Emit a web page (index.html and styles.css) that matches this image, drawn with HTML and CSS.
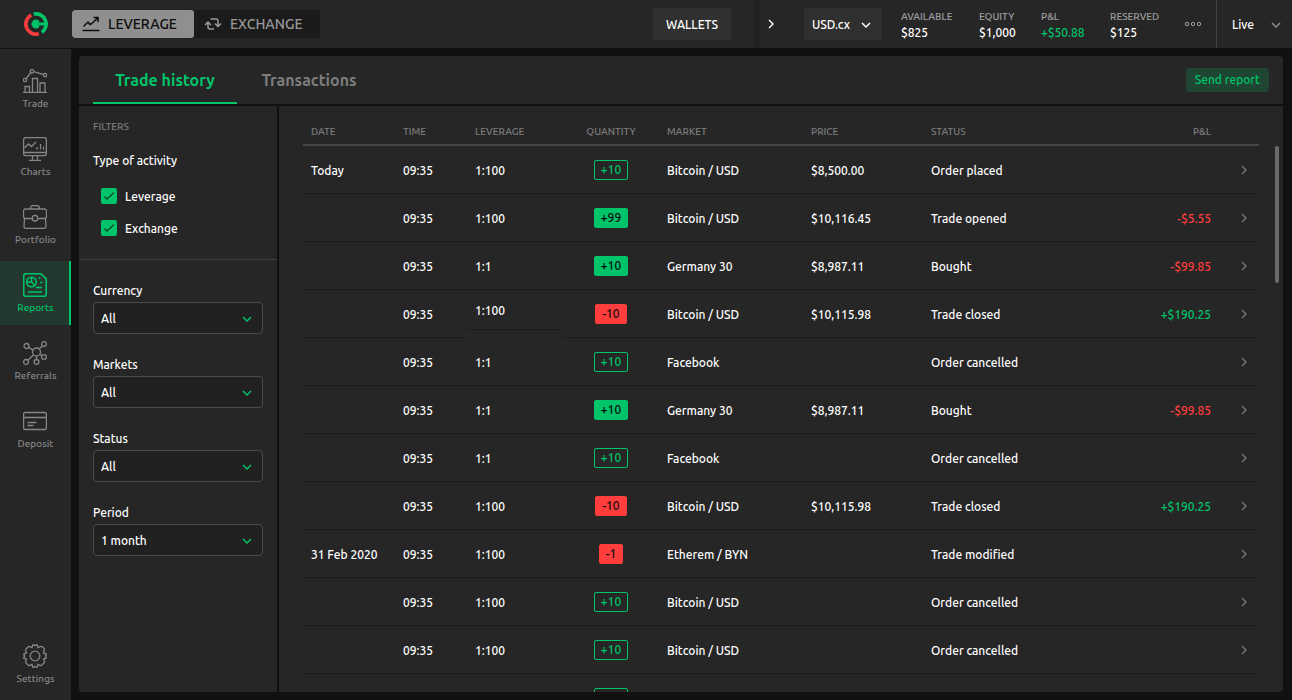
FILE: index.html
```html
<!DOCTYPE html>
<html lang="en">
<head>
<meta charset="utf-8">
<title>Trade history</title>
<link rel="stylesheet" href="styles.css">
</head>
<body>
<svg class="defs" aria-hidden="true">
  <symbol id="down" viewBox="0 0 12 12"><path d="M2 4l4 4 4-4"/></symbol>
  <symbol id="right" viewBox="0 0 12 12"><path d="M4 2l4 4-4 4"/></symbol>
</svg>
<div class="app">
  <header class="topbar">
    <svg class="logo" viewBox="0 0 24 24" aria-label="Logo">
      <path class="logo-red" d="M7.200 3A10.200 10.200 0 0 0 14.800 21.800"/>
      <path class="logo-green" d="M9.700 2.100A10.200 10.200 0 0 1 17.800 20.400"/>
      <path class="logo-mark" d="M15.500 9.200A4.500 4.500 0 1 0 15.500 14.800L14.500 13.500H22V10.500H14.500z"/>
    </svg>
    <div class="mode">
      <button class="mode-btn mode-active" type="button">
        <svg class="i18" viewBox="0 0 18 18"><path d="M.5 15.500h17M1.500 11.500l4.500-4.500 2 2.500 2-1L15.500 3M11.500 2.500h4.500V7"/></svg>LEVERAGE</button>
      <button class="mode-btn" type="button">
        <svg class="i18" viewBox="0 0 18 18"><path d="M4 7.500V12q0 2 2 2h4M1 10l3-3 3 3M6.500 4H12q2 0 2 2v5M11 8.500l3 3 3-3"/></svg>EXCHANGE</button>
    </div>
    <button class="wallets" type="button">WALLETS</button>
    <section class="account">
      <button class="collapse" type="button" aria-label="Collapse"><svg class="i12"><use href="#right"/></svg></button>
      <div class="select currency"><select aria-label="Account currency"><option>USD.cx</option></select><svg class="caret"><use href="#down"/></svg></div>
      <dl class="stats">
        <div><dt>AVAILABLE</dt><dd>$825</dd></div>
        <div><dt>EQUITY</dt><dd>$1,000</dd></div>
        <div><dt>P&amp;L</dt><dd class="up">+$50.88</dd></div>
        <div><dt>RESERVED</dt><dd>$125</dd></div>
      </dl>
      <button class="more" type="button" aria-label="More"><svg viewBox="0 0 18 6"><circle cx="3" cy="3" r="1.700"/><circle cx="9" cy="3" r="1.700"/><circle cx="15" cy="3" r="1.700"/></svg></button>
      <div class="select live"><select aria-label="Account mode"><option>Live</option></select><svg class="caret"><use href="#down"/></svg></div>
    </section>
  </header>
  <div class="body">
    <nav class="sidebar">
      <a class="nav" href="#trade"><svg viewBox="0 0 24 24"><path d="M0 23.300h24M2 23v-5.500h4.500V23M9.500 23V9.500h5V23M17 23v-9h5v9M3.200 9.500l4.500-6M10.500 2.700l9.500 2.600"/><circle cx="2" cy="11" r="1.700"/><circle cx="9" cy="2.300" r="1.700"/><circle cx="22" cy="6" r="1.700"/></svg>Trade</a>
      <a class="nav" href="#charts"><svg viewBox="0 0 24 24"><rect x=".6" y=".6" width="22.800" height="18" rx="2"/><path d="M.5 15.500h23M9.500 18.500v4M14.500 18.500v4M6 23.300h12M1.500 11l4-4 3 2.500L13 5M14 12.500V10M17.500 12.500V7M20.500 12.500V9.500"/></svg>Charts</a>
      <a class="nav" href="#portfolio"><svg viewBox="0 0 24 24"><path d="M7.500 4V3A2.400 2.400 0 0 1 10 .6h4A2.400 2.400 0 0 1 16.500 3v1M9.500 13.500h-7a2 2 0 0 1-2-2V6a2 2 0 0 1 2-2h19a2 2 0 0 1 2 2v5.500a2 2 0 0 1-2 2h-7M1.500 13.500l-.5 8a2 2 0 0 0 2 1.900h18a2 2 0 0 0 2-1.900l-.5-8"/><rect x="9.500" y="10.500" width="5" height="5.500" rx="2"/></svg>Portfolio</a>
      <a class="nav nav-active" href="#reports"><svg viewBox="0 0 24 24"><path d="M2.700.8H18l5.200 5v15.400a2 2 0 0 1-2 2H2.700a2 2 0 0 1-2-2V2.800a2 2 0 0 1 2-2zM5 19h14M8.500 4.500V9H4M8.500 9l3.500 3.500M15.500 5h2M17 9.500h2.500M13 14.500h6"/><circle cx="8.500" cy="9" r="4.800"/></svg>Reports</a>
      <a class="nav" href="#referrals"><svg viewBox="0 0 24 24"><circle cx="13.500" cy="11" r="4"/><circle cx="3.500" cy="5" r="2.500"/><circle cx="21" cy="3.100" r="2.400"/><circle cx="3" cy="20.900" r="2.400"/><circle cx="13.500" cy="20.900" r="2.400"/><circle cx="21" cy="16" r="2.400"/><path d="M5.700 6.300l4.200 2.800M16.300 8l3-3M10.700 13.800L4.900 19.300M13.500 15v3.500M17 13.200l2 1.400"/></svg>Referrals</a>
      <a class="nav" href="#deposit"><svg viewBox="0 0 24 24"><rect x=".6" y="3.500" width="22.800" height="17" rx="1.500"/><path d="M.5 8.500h23M4.500 13.500h9M4.500 16.500h6"/></svg>Deposit</a>
      <a class="nav nav-last" href="#settings"><svg viewBox="0 0 24 24"><path d="M9 3.500l.6-2.200q.2-.7 1-.7 1.400 2.200 2.800 0 .8 0 1 .7l.6 2.200 2.200-.9q1.400-.5 2.600.7l1.200 1.200q.6.700.1 1.500L20.500 9l2.200.6q.7.200.7 1-2.200 1.400 0 2.800 0 .8-.7 1l-2.200.6.9 2.200q.3.900-.3 1.600l-2.300 2.300q-.7.600-1.600.3L15 20.500l-.6 2.200q-.2.700-1 .7-1.400-2.200-2.800 0-.8 0-1-.7L9 20.500l-2.200.9q-.9.300-1.600-.3l-2.300-2.300q-.6-.7-.3-1.600L3.500 15l-2.200-.6q-.7-.2-.7-1 2.200-1.400 0-2.800 0-.8.7-1L3.500 9l-.9-2.200q-.3-.9.300-1.600l2.300-2.300q.7-.6 1.600-.3z"/><circle cx="12" cy="12" r="4.800"/></svg>Settings</a>
    </nav>
    <main class="panel">
      <div class="tabs">
        <button class="tab tab-active" type="button">Trade history</button>
        <button class="tab" type="button">Transactions</button>
        <button class="send" type="button">Send report</button>
      </div>
      <div class="content">
        <aside class="filters">
          <fieldset class="activity">
            <legend class="caption">FILTERS</legend>
            <p class="activity-title">Type of activity</p>
            <label class="check"><input type="checkbox" checked><svg viewBox="0 0 16 16"><path d="M3.500 8.500L6 11l7-6.500"/></svg>Leverage</label>
            <label class="check"><input type="checkbox" checked><svg viewBox="0 0 16 16"><path d="M3.500 8.500L6 11l7-6.500"/></svg>Exchange</label>
          </fieldset>
          <div class="fields">
            <div class="field"><label for="f-currency">Currency</label><div class="select"><select id="f-currency"><option>All</option></select><svg class="caret"><use href="#down"/></svg></div></div>
            <div class="field"><label for="f-markets">Markets</label><div class="select"><select id="f-markets"><option>All</option></select><svg class="caret"><use href="#down"/></svg></div></div>
            <div class="field"><label for="f-status">Status</label><div class="select"><select id="f-status"><option>All</option></select><svg class="caret"><use href="#down"/></svg></div></div>
            <div class="field"><label for="f-period">Period</label><div class="select"><select id="f-period"><option>1 month</option></select><svg class="caret"><use href="#down"/></svg></div></div>
          </div>
        </aside>
        <div class="history">
          <table class="trades">
            <colgroup><col class="c-date"><col class="c-time"><col class="c-lev"><col class="c-qty"><col class="c-market"><col class="c-price"><col class="c-status"><col class="c-pl"><col class="c-go"></colgroup>
            <thead><tr><th>DATE</th><th>TIME</th><th>LEVERAGE</th><th class="mid">QUANTITY</th><th>MARKET</th><th>PRICE</th><th>STATUS</th><th class="end">P&amp;L</th><th></th></tr></thead>
            <tbody>
              <tr><td><div>Today</div></td><td><div>09:35</div></td><td><div>1:100</div></td><td><div class="mid"><span class="qty">+10</span></div></td><td><div>Bitcoin / USD</div></td><td><div>$8,500.00</div></td><td><div>Order placed</div></td><td><div></div></td><td><div class="go"><svg class="i12"><use href="#right"/></svg></div></td></tr>
              <tr><td><div></div></td><td><div>09:35</div></td><td><div>1:100</div></td><td><div class="mid"><span class="qty buy">+99</span></div></td><td><div>Bitcoin / USD</div></td><td><div>$10,116.45</div></td><td><div>Trade opened</div></td><td><div class="end down">-$5.55</div></td><td><div class="go"><svg class="i12"><use href="#right"/></svg></div></td></tr>
              <tr><td><div></div></td><td><div>09:35</div></td><td><div>1:1</div></td><td><div class="mid"><span class="qty buy">+10</span></div></td><td><div>Germany 30</div></td><td><div>$8,987.11</div></td><td><div>Bought</div></td><td><div class="end down">-$99.85</div></td><td><div class="go"><svg class="i12"><use href="#right"/></svg></div></td></tr>
              <tr><td><div></div></td><td><div>09:35</div></td><td><div class="short">1:100</div></td><td><div class="mid"><span class="qty sell">-10</span></div></td><td><div>Bitcoin / USD</div></td><td><div>$10,115.98</div></td><td><div>Trade closed</div></td><td><div class="end up">+$190.25</div></td><td><div class="go"><svg class="i12"><use href="#right"/></svg></div></td></tr>
              <tr><td><div></div></td><td><div>09:35</div></td><td><div>1:1</div></td><td><div class="mid"><span class="qty">+10</span></div></td><td><div>Facebook</div></td><td><div></div></td><td><div>Order cancelled</div></td><td><div></div></td><td><div class="go"><svg class="i12"><use href="#right"/></svg></div></td></tr>
              <tr><td><div></div></td><td><div>09:35</div></td><td><div>1:1</div></td><td><div class="mid"><span class="qty buy">+10</span></div></td><td><div>Germany 30</div></td><td><div>$8,987.11</div></td><td><div>Bought</div></td><td><div class="end down">-$99.85</div></td><td><div class="go"><svg class="i12"><use href="#right"/></svg></div></td></tr>
              <tr><td><div></div></td><td><div>09:35</div></td><td><div>1:1</div></td><td><div class="mid"><span class="qty">+10</span></div></td><td><div>Facebook</div></td><td><div></div></td><td><div>Order cancelled</div></td><td><div></div></td><td><div class="go"><svg class="i12"><use href="#right"/></svg></div></td></tr>
              <tr><td><div></div></td><td><div>09:35</div></td><td><div>1:100</div></td><td><div class="mid"><span class="qty sell">-10</span></div></td><td><div>Bitcoin / USD</div></td><td><div>$10,115.98</div></td><td><div>Trade closed</div></td><td><div class="end up">+$190.25</div></td><td><div class="go"><svg class="i12"><use href="#right"/></svg></div></td></tr>
              <tr><td><div>31 Feb 2020</div></td><td><div>09:35</div></td><td><div>1:100</div></td><td><div class="mid"><span class="qty sell">-1</span></div></td><td><div>Etherem / BYN</div></td><td><div></div></td><td><div>Trade modified</div></td><td><div></div></td><td><div class="go"><svg class="i12"><use href="#right"/></svg></div></td></tr>
              <tr><td><div></div></td><td><div>09:35</div></td><td><div>1:100</div></td><td><div class="mid"><span class="qty">+10</span></div></td><td><div>Bitcoin / USD</div></td><td><div></div></td><td><div>Order cancelled</div></td><td><div></div></td><td><div class="go"><svg class="i12"><use href="#right"/></svg></div></td></tr>
              <tr><td><div></div></td><td><div>09:35</div></td><td><div>1:100</div></td><td><div class="mid"><span class="qty">+10</span></div></td><td><div>Bitcoin / USD</div></td><td><div></div></td><td><div>Order cancelled</div></td><td><div></div></td><td><div class="go"><svg class="i12"><use href="#right"/></svg></div></td></tr>
              <tr><td><div></div></td><td><div></div></td><td><div></div></td><td><div class="mid"><span class="qty"></span></div></td><td><div></div></td><td><div></div></td><td><div></div></td><td><div></div></td><td><div></div></td></tr>
            </tbody>
          </table>
          <div class="scroll"><div class="thumb"></div></div>
        </div>
      </div>
    </main>
  </div>
</div>
</body>
</html>
```
FILE: styles.css
```css
:root {
  --bg: #111;
  --surface: #262626;
  --green: #00c46a;
  --red: #ff3d3d;
  --muted: #7d7d7d;
}
* { box-sizing: border-box; }
body {
  margin: 0;
  background: var(--bg);
  color: #fff;
  font: 500 12px/16px Ubuntu, "Noto Sans", sans-serif;
}
button, select {
  font: inherit;
  color: inherit;
  border: 0;
  background: none;
  padding: 0;
  margin: 0;
}
svg { fill: none; stroke: currentColor; flex: none; }
dl, dd, p, fieldset { margin: 0; padding: 0; border: 0; min-width: 0; }
.defs { position: absolute; width: 0; height: 0; }
.i12 { width: 12px; height: 12px; stroke-width: 1.4; }
.i18 { width: 18px; height: 18px; stroke-width: 1.5; }
.up { color: var(--green); }
.down { color: var(--red); }

.app { display: flex; flex-direction: column; height: 100vh; overflow: hidden; }

.topbar { display: flex; align-items: center; height: 48px; flex: none; background: var(--surface); }
.logo { width: 24px; height: 24px; margin: 0 24px; }
.logo-red { stroke: var(--red); stroke-width: 3.6; }
.logo-green { stroke: var(--green); stroke-width: 3.6; }
.logo-mark { fill: var(--green); stroke: none; }
.mode { display: flex; border-radius: 3px; overflow: hidden; background: #1b1b1b; }
.mode-btn {
  display: flex;
  align-items: center;
  gap: 8px;
  height: 28px;
  padding: 0 18px 0 10px;
  font-size: 14px;
  color: #9a9a9a;
}
.mode-active { padding-right: 17px; background: #8f8f8f; color: #0c0c0c; border-radius: 3px; }
.wallets { width: 78px; height: 32px; margin: 0 24px 0 auto; padding-top: 2px; border-radius: 4px; background: #303030; }
.account {
  display: flex;
  align-items: center;
  height: 48px;
  padding-left: 10px;
  background: linear-gradient(90deg, #1f1f1f, #262626 8px);
}
.collapse { display: flex; margin-right: 27px; }
.select { position: relative; }
.select select { appearance: none; display: block; width: 100%; height: 32px; border-radius: 4px; padding: 2px 8px 0; }
.caret { position: absolute; right: 10px; top: 11px; width: 12px; height: 12px; stroke-width: 1.5; pointer-events: none; }
.currency { width: 78px; }
.currency select { background: #303030; }
.stats { display: grid; grid-template-columns: 78px 62px 69px 74px; margin: 2px 0 0 19px; }
.stats dt { font-size: 10px; line-height: 16px; color: #a0a0a0; }
.more { display: flex; color: #a0a0a0; }
.more svg { width: 18px; height: 6px; }
.live { width: 76px; margin-left: 14px; border-left: 1px solid #414141; }
.live select { height: 48px; padding: 2px 15px 0; }
.live .caret { top: 19px; right: 10px; color: #8a8a8a; }

.body { display: flex; flex: 1; min-height: 0; }
.sidebar {
  display: flex;
  flex-direction: column;
  gap: 4px;
  width: 71px;
  flex: none;
  padding: 8px 0 4px;
  margin-top: 1px;
  background: var(--surface);
}
.nav {
  display: flex;
  flex-direction: column;
  align-items: center;
  gap: 5px;
  height: 64px;
  padding-top: 12px;
  font-size: 10px;
  line-height: 12px;
  color: #868686;
  text-decoration: none;
}
.nav svg { width: 24px; height: 24px; margin-right: 1px; stroke-width: 1.3; }
.nav-active { background: #23382e; color: var(--green); box-shadow: inset -2px 0 var(--green); }
.nav-active svg { stroke-width: 1.6; }
.nav-last { margin-top: auto; }

.panel {
  display: flex;
  flex-direction: column;
  flex: 1;
  min-width: 0;
  margin: 8px 9px 8px 8px;
  border-radius: 4px;
  overflow: hidden;
  background: var(--surface);
}
.tabs { display: flex; align-items: center; height: 50px; flex: none; padding: 0 14px; border-bottom: 2px solid var(--bg); }
.tab { width: 144px; height: 48px; padding-top: 2px; font-size: 16px; font-weight: 700; color: var(--muted); border-bottom: 2px solid transparent; }
.tab-active { color: var(--green); border-color: var(--green); }
.send { height: 24px; margin-left: auto; padding: 0 9px; border-radius: 4px; background: #1f4533; color: var(--green); }
.content { display: flex; flex: 1; min-height: 0; }
.filters { width: 200px; flex: none; border-right: 2px solid var(--bg); }
.activity { padding: 13px 14px 22px; border-bottom: 1px solid #404040; }
.caption { padding: 0; font-size: 10px; color: var(--muted); float: left; }
.activity-title { clear: both; padding: 18px 0 11px; }
.check { display: flex; align-items: flex-end; position: relative; gap: 8px; height: 17px; margin: 8px 8px 0; }
.check + .check { margin-top: 15px; }
.check input { appearance: none; align-self: flex-start; width: 16px; height: 16px; margin: 0; border-radius: 2px; background: var(--green); }
.check svg { position: absolute; left: 0; top: 0; width: 16px; height: 16px; stroke: #114a2e; stroke-width: 1.5; pointer-events: none; }
.fields { display: grid; gap: 22px; padding: 22px 14px; }
.field { display: grid; gap: 3px; }
.field label { padding-top: 1px; }
.field select { background: #212121; border: 1px solid #4b4b4b; padding: 2px 7px 0; }
.field .caret { color: var(--green); }

.history { display: flex; flex: 1; min-width: 0; padding-left: 24px; overflow: hidden; }
.trades { flex: 1; align-self: flex-start; table-layout: fixed; width: 100%; border-collapse: separate; border-spacing: 0; }
.c-date { width: 92px; }
.c-time { width: 72px; }
.c-lev, .c-qty { width: 96px; }
.c-market { width: 144px; }
.c-price { width: 120px; }
.c-pl { width: 120px; }
.c-go { width: 40px; }
.trades th {
  height: 40px;
  padding: 18px 8px 4px;
  border-bottom: 2px solid #464646;
  font-size: 10px;
  font-weight: 500;
  text-align: left;
  color: var(--muted);
}
.trades td { padding: 0; vertical-align: top; }
.trades td > div { display: flex; align-items: center; height: 48px; padding: 3px 8px 0; border-bottom: 1px solid #1a1a1a; white-space: nowrap; }
.trades td > .short { height: 40px; }
.trades td > .end { justify-content: flex-end; }
.trades .end { text-align: right; }
.trades th.mid { text-align: center; }
.trades td > .mid { justify-content: center; padding-top: 1px; }
.trades td > .go { justify-content: flex-end; padding: 1px 9px 0; color: #777; }
.qty { min-width: 24px; height: 20px; padding: 0 6px; border: 1px solid var(--green); border-radius: 2px; line-height: 18px; color: var(--green); }
.qty:empty { width: 34px; }
.buy { background: var(--green); color: #0c0c0c; }
.sell { background: var(--red); border-color: var(--red); color: #0c0c0c; }
.scroll { flex: none; width: 24px; padding: 40px 4px 0 16px; }
.thumb { height: 137px; border-radius: 2px; background: #6a6a6a; }
```
